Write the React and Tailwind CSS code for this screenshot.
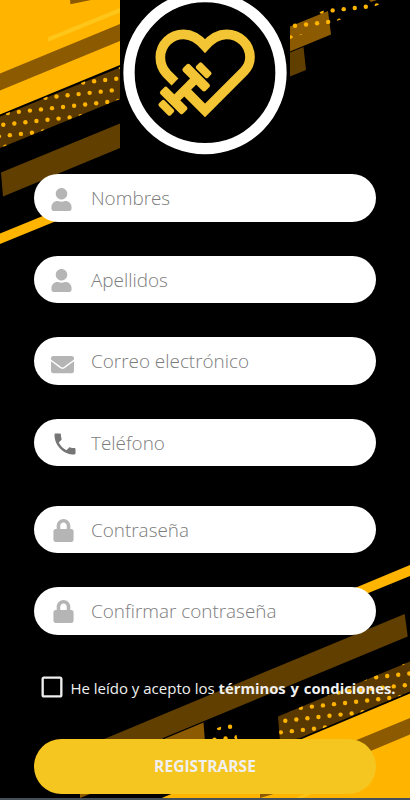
import { FaUser, FaEnvelope, FaLock } from 'react-icons/fa';
import { MdPhone, MdCheckBoxOutlineBlank } from 'react-icons/md';

const fields = [
  { name: 'nombres', label: 'Nombres', type: 'text', Icon: FaUser, icon: 'ml-[15.5px] mt-[2px] size-[23px] text-[#b5b5b5]', gap: '' },
  { name: 'apellidos', label: 'Apellidos', type: 'text', Icon: FaUser, icon: 'ml-[15.5px] mt-[2px] size-[23px] text-[#b5b5b5]', gap: 'mt-[33.8px]' },
  { name: 'correo', label: 'Correo electrónico', type: 'email', Icon: FaEnvelope, icon: 'ml-[17px] mt-[8px] size-[23px] text-[#b5b5b5]', gap: 'mt-[33.8px]' },
  { name: 'telefono', label: 'Teléfono', type: 'tel', Icon: MdPhone, icon: 'ml-[17px] mt-[3.5px] size-[28px] text-[#757575]', gap: 'mt-[33.8px]' },
  { name: 'password', label: 'Contraseña', type: 'password', Icon: FaLock, icon: 'ml-[18px] mt-[2.5px] size-[23px] text-[#b5b5b5]', gap: 'mt-[39.6px]' },
  { name: 'confirm', label: 'Confirmar contraseña', type: 'password', Icon: FaLock, icon: 'ml-[18px] mt-[2px] size-[23px] text-[#b5b5b5]', gap: 'mt-[33.8px]' }
];

// slanted grid of dots, starting from (x, y) and cut to the clip path
function Dots({ x, y, clip }) {
  const dots = [];
  for (let row = -8; row <= 8; row++) {
    for (let col = -15; col <= 15; col++) {
      dots.push(
        <circle
          key={`${row}-${col}`}
          cx={x + col * 11.05 + row * 4.5}
          cy={y - col * 1.22 - row * 11.65}
          r="2.2"
        />
      );
    }
  }
  return (
    <g fill="#ffb400" clipPath={`url(#${clip})`}>
      {dots}
    </g>
  );
}

function Background() {
  return (
    <svg viewBox="0 0 410 800" className="absolute inset-0 h-[800px] w-[410px]">
      <defs>
        <clipPath id="dotsLeft">
          <path d="M0 116 120 67V99L0 148Z" />
        </clipPath>
        <clipPath id="dotsTop">
          <path d="M290 24 340 4 391 0 290 39Z" />
        </clipPath>
        <clipPath id="dotsRight">
          <path d="M278 716.5 410 661.5V691.5L300 738 280 742Z" />
        </clipPath>
        <clipPath id="dotsSmall">
          <path d="M212 730 233 722 236.500 735 238 742H210Z" />
        </clipPath>
      </defs>
      {/* top left */}
      <path fill="#ffb400" d="M0 0H120V65L0 114.5Z" />
      <path fill="#8c5a00" d="M70 0H91L70.500 4.200ZM0 73.500 120 24V41L0 90.500Z" />
      <path fill="#ffc61a" d="M47.500 37.500 120 8V12.500L48.500 41.500Z" />
      <path fill="#593900" d="M0 116.500 120 67.500V99L0 148Z" />
      <Dots x={3.3} y={124.7} clip="dotsLeft" />
      <path fill="#613f00" d="M1 172.500 120 123.500V148L3 196.500Z" />
      <path fill="#ffb400" d="M0 233.500 60 209V219.500L0 244Z" />
      {/* top right */}
      <path fill="#8c5a00" d="M290 26.500 328 11 331 34.500 290 51.500Z" />
      <path fill="#613f00" d="M290 52.500 303.500 47 306 70 290 76.500Z" />
      <path fill="#8c5a00" d="M369 0H377L371 2Z" />
      <Dots x={295} y={25.7} clip="dotsTop" />
      {/* bottom right */}
      <path fill="#ffb400" d="M350 590 410 565V576L350 600.500Z" />
      <path fill="#613f00" d="M404.700 614 407.700 636.500 163 738V742H97L200 699Z" />
      <path fill="#8c5a00" d="M164 739 203.500 722.500 205 742H164ZM80 790H100L80 798Z" />
      <Dots x={219} y={728} clip="dotsSmall" />
      <path fill="#593900" d="M278 716.500 410 661.500V691.500L300 738 280 742Z" />
      <Dots x={285.3} y={720.7} clip="dotsRight" />
      <path fill="#ffb400" d="M410 693.500V800H157L303 738.500Z" />
      <path fill="#8c5a00" d="M410 718V734.500L330 768V751ZM260 790H287L260 798Z" />
      <path fill="#ffc61a" d="M291 800 315 790H321L297 800Z" />
    </svg>
  );
}

function Logo() {
  return (
    <div className="mx-auto flex h-[165px] w-[170px] justify-center bg-black">
      <svg viewBox="0 0 540 495" className="h-[165px] w-[180px] shrink-0">
        <circle cx="270" cy="218" r="228" fill="none" stroke="#fff" strokeWidth="34" />
        <path
          fill="none"
          stroke="#f3c433"
          strokeWidth="29"
          d="M180 246 155 221C141 206 136 191 136 172 136 133 167 103 206 103 232 103 250 115 270 138 290 115 308 103 334 103 374 103 405 133 405 172 405 191 399 202 387 214L270 331 215 276"
        />
        <g fill="#f3c433">
          <rect x="-48" y="-13" width="96" height="26" transform="translate(210 269) rotate(-45)" />
          <rect x="-48" y="-14.500" width="96" height="29" rx="7" transform="translate(243.500 233) rotate(45)" />
          <rect x="-25" y="-12" width="50" height="24" rx="6" transform="translate(266 211) rotate(45)" />
          <rect x="-48" y="-14.500" width="96" height="29" rx="7" transform="translate(176 301.500) rotate(45)" />
          <rect x="-25" y="-12" width="50" height="24" rx="6" transform="translate(154 323.500) rotate(45)" />
        </g>
      </svg>
    </div>
  );
}

function Field({ name, label, type, Icon, icon, gap }) {
  return (
    <label className={`flex h-[47.6px] w-full items-center rounded-full bg-white ${gap}`}>
      <span className="flex w-[57px] shrink-0">
        <Icon className={`shrink-0 ${icon}`} />
      </span>
      <input
        type={type}
        name={name}
        placeholder={label}
        className="h-full w-[260px] bg-transparent pt-[0.5px] text-[18.9px] font-light outline-none placeholder:text-[#7c7c7c]"
      />
    </label>
  );
}

export default function App() {
  return (
    <main className="relative h-[800px] w-[410px] overflow-hidden bg-black font-['Open_Sans',sans-serif]">
      <Background />
      <div className="relative flex h-full flex-col">
        <Logo />
        <form className="flex flex-col px-[34px] pt-[9.4px]">
          {fields.map((field) => (
            <Field key={field.name} {...field} />
          ))}
          <div className="mt-[38px] ml-[4.400px] flex h-[28px] items-center whitespace-nowrap text-[15px] text-[#f0f0f0]">
            <MdCheckBoxOutlineBlank className="size-[28px] shrink-0" />
            <p className="ml-[4px] mt-[3px]">
              He leído y acepto los{' '}
              <b className="text-[14.8px] font-bold [word-spacing:1px]">términos y condiciones.</b>
            </p>
          </div>
          <button
            type="button"
            className="mt-[38.300px] h-[55px] w-full rounded-full bg-[#f5c520] text-[15.6px] font-bold text-[#f0f0f0]"
          >
            REGISTRARSE
          </button>
        </form>
        <div className="mt-auto h-[2.500px] shrink-0 bg-[#455058]" />
      </div>
    </main>
  );
}
